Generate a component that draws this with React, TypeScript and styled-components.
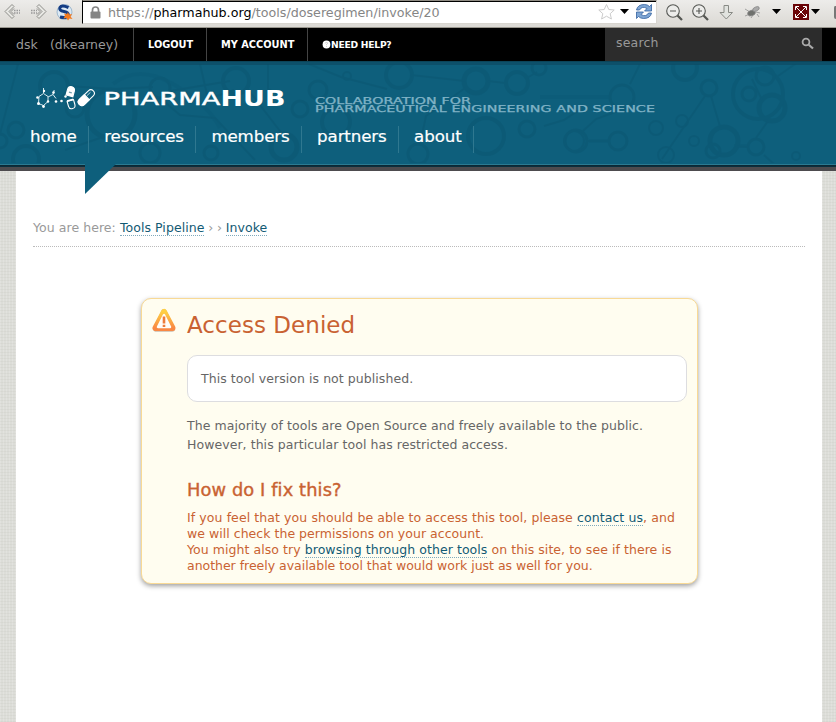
import React from "react";
import styled, { createGlobalStyle } from "styled-components";

const GlobalStyle = createGlobalStyle`
  * { box-sizing: border-box; }
  body {
    margin: 0;
    height: 722px;
    overflow: hidden;
    font: 12.5px/19px "DejaVu Sans", Verdana, sans-serif;
    letter-spacing: 0.06px;
    color: #666;
  }
  svg { display: block; flex: none; }
`;

const Window = styled.div`
  height: 722px;
  display: flex;
  flex-direction: column;
  overflow: hidden;
  background-color: #dcddd8;
  background-image:
    repeating-linear-gradient(0deg, rgba(150, 150, 135, 0.08) 0 1px, transparent 1px 3px),
    repeating-linear-gradient(90deg, rgba(255, 255, 255, 0.16) 0 1px, transparent 1px 3px);
`;

/* Browser toolbar */
const BrowserBar = styled.div`
  height: 28px;
  flex: none;
  display: flex;
  background: linear-gradient(#edecea, #dbd9d4 26px);
  border-bottom: 1px solid #99968e;
`;
const Controls = styled.div<{ $width: number }>`
  width: ${(p) => p.$width}px;
  flex: none;
`;
const AddressBar = styled.div`
  width: 575px;
  height: 24px;
  flex: none;
  display: flex;
  align-items: center;
  background: #fff;
  border: 1px solid #d8d5cf;
  border-top: 1px solid #8f8b83;
  border-left: 1px solid #000;
  box-shadow: inset 0 1px #000;
  padding-left: 7px;
`;
const Url = styled.span`
  margin: 1px auto 0 7px;
  font-size: 12.7px;
  letter-spacing: 0;
  color: #858585;
  b { font-weight: 400; color: #000; }
`;

/* Account bar */
const AccountBar = styled.div`
  height: 33px;
  flex: none;
  display: flex;
  padding-right: 14px;
  background: #000;
  color: #999;
`;
const User = styled.div`
  width: 134px;
  padding-left: 16px;
  line-height: 34px;
  white-space: pre;
  border-right: 1px solid #444;
  span { margin-left: 12px; }
`;
const AccountLink = styled.a<{ $last?: boolean; $wide: number }>`
  width: ${(p) => p.$wide}px;
  padding-left: 14px;
  display: flex;
  align-items: center;
  border-right: ${(p) => (p.$last ? "0" : "1px solid #444")};
  color: #fff;
  font-size: ${(p) => (p.$last ? "9.2px" : "9.8px")};
  letter-spacing: ${(p) => (p.$last ? "-0.25px" : "0")};
  font-weight: 700;
  white-space: nowrap;
`;
const Search = styled.div`
  width: 217px;
  margin-left: auto;
  display: flex;
  justify-content: space-between;
  padding: 0 8px 0 11px;
  line-height: 30px;
  background: #2c2c2c;
  letter-spacing: 0.2px;
  svg { margin-top: 9px; }
`;

/* Site header */
const Header = styled.header`
  position: relative;
  height: 110px;
  flex: none;
  background: #0e5f7c;
  border-bottom: 4px solid #4d4b4e;
  box-shadow: inset 0 -1px #0b2f3d, inset 0 -2px #0d2834, inset 0 -3px #2b7b92, inset 0 1px #0b4459, inset 0 4px #0d506a;
`;
const Backdrop = styled.svg`
  position: absolute;
  inset: 3px 0 auto 0;
  filter: blur(0.6px);
`;
const Flag = styled.svg`
  position: absolute;
  left: 85px;
  top: 102px;
`;
const HeaderBody = styled.div`
  position: relative;
  display: flex;
  flex-direction: column;
`;
const Nav = styled.nav`
  display: flex;
  margin: 4px 0 0 15px;
`;
const NavItem = styled.a`
  height: 27px;
  padding: 0 11.5px 0 15px;
  border-right: 1px solid #2f7890;
  color: #fff;
  font-size: 16.7px;
  line-height: 20px;
  letter-spacing: -0.14px;
  -webkit-text-stroke: 0.2px #fff;
`;

/* Page */
const Page = styled.main`
  width: 806px;
  flex: 1;
  margin-left: 16px;
  padding: 47px 17px 0;
  background: #fff;
`;
const Link = styled.a`
  color: #125a74;
  border-bottom: 1px dotted #80aabc;
`;
const Breadcrumb = styled.div`
  height: 29px;
  border-bottom: 1px dotted #bbb;
  color: #999;
  line-height: 19px;
  white-space: nowrap;
`;
const Chevron = styled.span`
  letter-spacing: -0.1px;
`;
const Notice = styled.section`
  width: 557px;
  height: 286px;
  margin: 51px 0 0 108px;
  display: flex;
  align-items: flex-start;
  gap: 11px;
  padding: 9px 10px 10px;
  border: 1px solid #f8d995;
  border-radius: 10px;
  background: #fffdf0;
  box-shadow: 0 2px 5px rgba(0, 0, 0, 0.38);
`;
const NoticeBody = styled.div`
  flex: 1;
  white-space: nowrap;
`;
const Title = styled.h1`
  margin: 3px 0 16px;
  color: #c96232;
  font-size: 23px;
  font-weight: 400;
  line-height: 28px;
  letter-spacing: 0.04px;
`;
const Message = styled.div`
  height: 47px;
  padding-left: 13px;
  line-height: 45px;
  border: 1px solid #dddde0;
  border-radius: 10px;
  background: #fff;
`;
const Text = styled.p`
  margin: 14px 0 24px;
  line-height: 19px;
`;
const Subtitle = styled.h2`
  margin: 0 0 8px;
  color: #c96232;
  font-size: 17.8px;
  font-weight: 400;
  line-height: 24px;
  letter-spacing: 0.12px;
  -webkit-text-stroke: 0.4px #c96232;
`;
const Advice = styled.p`
  margin: 0;
  color: #c96232;
  line-height: 16px;
`;
const Line = styled.span<{ $tracking: number }>`
  display: block;
  letter-spacing: ${(p) => p.$tracking}px;
`;

const molecules: [number, number, number, number][] = [
  [54, 22, 14, 4], [16, 66, 8, 3], [75, 44, 9, 3], [111, 50, 24, 5], [160, 24, 10, 3],
  [236, 17, 13, 4], [26, 95, 13, 4], [150, 89, 10, 3], [211, 89, 7, 3], [284, 83, 13, 5],
  [0, 77, 7, 3], [347, 12, 4, 2], [399, 11, 13, 4], [318, 26, 9, 3], [300, 45, 8, 3],
  [336, 58, 14, 4], [476, 17, 12, 5], [517, 19, 11, 4], [539, 4, 7, 3], [527, 65, 8, 3],
  [576, 77, 11, 3], [618, 77, 9, 3], [622, 33, 12, 3], [685, 4, 12, 4], [709, 24, 8, 3],
  [749, 30, 7, 3], [772, 44, 13, 5], [758, 30, 25, 4], [765, 12, 9, 3], [724, 77, 14, 5],
  [756, 83, 8, 3], [713, 87, 7, 3], [656, 64, 7, 2], [682, 57, 6, 2], [694, 77, 5, 2],
  [666, 91, 8, 2], [796, 92, 4, 2], [486, 72, 18, 4], [574, 77, 10, 2], [418, 90, 10, 3],
];

const Molecules = () => (
  <Backdrop width="836" height="99" fill="none" stroke="#084e69" opacity="0.28">
    {molecules.map(([x, y, r, w], i) => (
      <circle key={i} cx={x} cy={y} r={r} strokeWidth={w} />
    ))}
    <g strokeWidth="2">
      <path d="M18 0 0 70M68 22l45 3 40-2M170 27l60-10M247 24l36 47M200 0l8 35 26-9M309 0l32 13 46 12" />
      <path d="M411 11l54 6M488 17l17 2M527 14l10-6M544 62l20-6 15-10M587 77h22M630 20l10-20M662 95l43-63" />
      <path d="M711 32l10 34M762 36l-10-21M768 57l-12 17M736 82l12 1M764 91l12 11M420 80l6-28 39-28" />
      <path d="M583 67l13-12 22-8M100 74l-35 12M268 0v25l15 8M160 34l20 17 35 3 40 42M778 12l20-14" />
    </g>
    <g strokeWidth="4" opacity="0.55">
      <path d="M540 33h70M589 77h20M734 82h14M113 20q25-20 60 0t47 44" />
    </g>
  </Backdrop>
);

const Brand = () => (
  <svg width="700" height="61" viewBox="0 0 700 61">
    <g fill="none" stroke="#d5e8ee" strokeWidth="1">
      <path d="M39 35.500l4.500-3 4.500 3v5l-4.500 4-5-2zM48 36l5-2.500 1.200-4.500M53 33.500l3 4M43.500 32v-5" />
    </g>
    <g fill="#fff">
      <circle cx="37.500" cy="36.500" r="1.300" /><circle cx="44" cy="30" r="1.200" />
      <circle cx="38.500" cy="42.500" r="1.500" /><circle cx="43.500" cy="45.500" r="1.400" />
      <circle cx="48" cy="40.500" r="1.200" /><circle cx="53.500" cy="31.500" r="1.300" />
      <circle cx="56" cy="40.500" r="1.300" /><circle cx="61.500" cy="40" r="1.300" />
      <circle cx="65.500" cy="35.500" r="1.200" />
    </g>
    <g stroke="#fff" strokeWidth="1.100">
      <g transform="rotate(15 70.500 31)">
        <path d="M67 35v-6a3.500 3.500 0 0 1 7 0v6z" fill="#fff" />
        <path d="M69 31.500h3" stroke="#719dac" />
      </g>
      <g transform="rotate(-16 71 42)">
        <path d="M67.700 39.500h6.600v5a3.300 3.300 0 0 1-6.600 0z" fill="none" />
        <path d="M67.700 39h6.600" strokeWidth="1.600" />
      </g>
      <g transform="rotate(46 86.500 36.500)">
        <rect x="83" y="27" width="7" height="19.500" rx="3.500" fill="none" />
        <path d="M83 36h7v7a3.500 3.500 0 0 1-7 0z" fill="#fff" />
        <path d="M85.500 30v5" strokeWidth="0.700" />
      </g>
    </g>
    <g fill="#fff" fontFamily="DejaVu Sans, sans-serif">
      <text x="103.500" y="43.500" fontSize="18.500" textLength="117" lengthAdjust="spacingAndGlyphs" stroke="#fff" strokeWidth="0.400">PHARMA</text>
      <text x="220.500" y="44.500" fontSize="21" fontWeight="700" textLength="65" lengthAdjust="spacingAndGlyphs">HUB</text>
    </g>
    <g fill="#80b3c6" stroke="#80b3c6" strokeWidth="0.250" fontFamily="DejaVu Sans, sans-serif" fontSize="8">
      <text x="315" y="43" textLength="156" lengthAdjust="spacingAndGlyphs">COLLABORATION FOR</text>
      <text x="315" y="51.300" textLength="340" lengthAdjust="spacingAndGlyphs">PHARMACEUTICAL ENGINEERING AND SCIENCE</text>
    </g>
  </svg>
);

const HistoryIcons = () => (
  <svg width="82" height="27" fill="none">
    <g stroke="#8d8d89" strokeWidth="1">
      <path d="M12 4.500 5 11.500l7 7 2-2-5-5 5-5zM39 4.500l7 7-7 7-2-2 5-5-5-5z" fill="#e9e9e5" />
      <path d="M14 8.500 11 11.500l3 3M37 8.500l3 3-3 3" />
    </g>
    <path d="M14 10.500h6M14 13h6M31 10.500h6M31 13h6" stroke="#999" strokeWidth="1.500" strokeDasharray="1.500 1" />
    <circle cx="64.500" cy="12" r="7.500" fill="#dce9f3" stroke="#8aa9c5" strokeWidth="0.800" />
    <path d="M68.500 7.500q-7-3-8.500 0t4 4 4 4-8 1.500" stroke="#143c83" strokeWidth="3" />
    <path d="M68 12l1 2.500 3-.5-1.500 2.500 2 2.500-3-.5-1.500 2-1.500-2.500-3 .5 1.500-3-1-2 3 .5z" fill="#f47b20" />
  </svg>
);

const BrowserTools = () => (
  <svg width="179" height="27" viewBox="657 0 179 27" fill="none">
    <g stroke="#555753" strokeWidth="1.100">
      <path d="M677.500 15.500l4.500 4.500M703.500 15.500l4.500 4.500" strokeWidth="2.300" />
      <circle cx="673" cy="11" r="6.300" fill="#ececea" /><circle cx="699" cy="11" r="6.300" fill="#ececea" />
      <path d="M670 11h6M696 11h6M699 8v6" />
    </g>
    <path d="M724 5.500h4.500v7h4l-6.200 6.500-6.300-6.500h4z" fill="#e1e3df" stroke="#888a85" />
    <g stroke="#858585" strokeWidth="0.700">
      <path d="M750 12l-5-3M750 14l-5 2M753 15l-2 3M756 12l4 1M755 9l4-2M757 14l2 3" />
      <ellipse cx="751.500" cy="13" rx="4" ry="2.700" fill="#6f716d" transform="rotate(-20 751.500 13)" />
      <ellipse cx="756" cy="9" rx="3.500" ry="2" fill="#aaa" transform="rotate(-25 756 9)" />
    </g>
    <path d="M772 9h9l-4.500 5zM811 9h9l-4.500 5z" fill="#000" />
    <rect x="793" y="4" width="16" height="16" fill="#6b0508" />
    <g stroke="#fff" strokeWidth="1">
      <path d="M795.500 10V6.500h3.500M803 6.500h3.500V10M806.500 14v3.500H803M799 17.500h-3.500V14" />
      <path d="M796 7l10 10M806 7l-10 10" />
    </g>
    <path d="M836 6h-1q-1 0-1 2v9q0 2 2 2z" fill="#777" />
  </svg>
);

const AddressIcons = () => (
  <svg width="60" height="23" viewBox="596 1 60 23" fill="none">
    <path d="M606.500 4.500l2.300 5 5.400.5-4 3.700 1.200 5.300-4.900-2.800-4.900 2.800 1.200-5.300-4-3.700 5.400-.5z" fill="#fff" stroke="#ccc" />
    <path d="M620 9h9l-4.500 5z" fill="#000" />
    <g stroke="#315f9e" strokeWidth="0.800" fill="#7fa6d4">
      <path d="M636.500 10q1-5.500 8-5.500 3 0 5 2l2-2v6.500h-7l2.500-2.500q-5-3-7.500 1.500z" />
      <path d="M651.500 13q-1 5.500-8 5.500-3 0-5-2l-2 2V12h7l-2.500 2.500q5 3 7.500-1.500z" />
    </g>
  </svg>
);

const LockIcon = () => (
  <svg width="11" height="13" viewBox="0 0 11 13">
    <path d="M2.500 6V4a3 3 0 0 1 6 0v2" fill="none" stroke="#858585" strokeWidth="1.700" />
    <rect x="0.500" y="5.500" width="10" height="7" rx="1" fill="#858585" />
  </svg>
);

const HelpIcon = () => (
  <svg width="9" height="9" viewBox="0 0 9 9">
    <circle cx="4.500" cy="4.500" r="3.900" fill="#fff" />
    <path d="M3.200 3.500q.2-1.300 1.500-1.100 1.400.3.700 1.300l-.9.900v.5M4.500 6.200v.8" stroke="#bbb" strokeWidth="0.700" fill="none" />
  </svg>
);

const SearchIcon = () => (
  <svg width="13" height="13" viewBox="0 0 13 13" fill="none" stroke="#aaa">
    <circle cx="5" cy="5" r="3.400" strokeWidth="1.800" />
    <path d="M7.700 7.700 12 11.500" strokeWidth="2.200" />
  </svg>
);

const WarningIcon = () => (
  <svg width="24" height="25" viewBox="0 0 24 25">
    <defs>
      <linearGradient id="amber" x2="0" y2="1">
        <stop stopColor="#ffcf42" />
        <stop offset="1" stopColor="#f98844" />
      </linearGradient>
    </defs>
    <path d="M12 4 4 20.800h16z" fill="#b9aa99" stroke="#c7bcae" strokeWidth="6" strokeLinejoin="round" />
    <path d="M12 4 3.500 20h17z" fill="#fff" stroke="url(#amber)" strokeWidth="6" strokeLinejoin="round" />
    <path d="M12 7 6 19h12z" fill="#fffdf8" stroke="#fffdf8" strokeWidth="2.500" strokeLinejoin="round" />
    <path d="M12 8.500v7M12 16.800v2.200" stroke="#ed7c3a" strokeWidth="2.600" />
  </svg>
);

const sections = ["home", "resources", "members", "partners", "about"];

export default function App() {
  return (
    <Window>
      <GlobalStyle />
      <BrowserBar>
        <Controls $width={82}><HistoryIcons /></Controls>
        <AddressBar>
          <LockIcon />
          <Url>https://<b>pharmahub.org</b>/tools/doseregimen/invoke/20</Url>
          <AddressIcons />
        </AddressBar>
        <Controls $width={179}><BrowserTools /></Controls>
      </BrowserBar>
      <AccountBar>
        <User>dsk<span>(dkearney)</span></User>
        <AccountLink $wide={73}>LOGOUT</AccountLink>
        <AccountLink $wide={101}>MY ACCOUNT</AccountLink>
        <AccountLink $last $wide={110}><HelpIcon />NEED HELP?</AccountLink>
        <Search>search<SearchIcon /></Search>
      </AccountBar>
      <Header>
        <Molecules />
        <HeaderBody>
          <Brand />
          <Nav>{sections.map((s) => <NavItem key={s}>{s}</NavItem>)}</Nav>
        </HeaderBody>
        <Flag width="32" height="32"><path d="M0 0h32L0 31z" fill="#0e5f7c" /></Flag>
      </Header>
      <Page>
        <Breadcrumb>
          You are here: <Link>Tools Pipeline</Link><Chevron> › › </Chevron><Link>Invoke</Link>
        </Breadcrumb>
        <Notice>
          <WarningIcon />
          <NoticeBody>
            <Title>Access Denied</Title>
            <Message>This tool version is not published.</Message>
            <Text>
              The majority of tools are Open Source and freely available to the public.<br />
              However, this particular tool has restricted access.
            </Text>
            <Subtitle>How do I fix this?</Subtitle>
            <Advice>
              <Line $tracking={0.09}>If you feel that you should be able to access this tool, please <Link>contact us</Link>, and</Line>
              <Line $tracking={0.03}>we will check the permissions on your account.</Line>
              <Line $tracking={0.06}>You might also try <Link>browsing through other tools</Link> on this site, to see if there is</Line>
              <Line $tracking={-0.02}>another freely available tool that would work just as well for you.</Line>
            </Advice>
          </NoticeBody>
        </Notice>
      </Page>
    </Window>
  );
}
